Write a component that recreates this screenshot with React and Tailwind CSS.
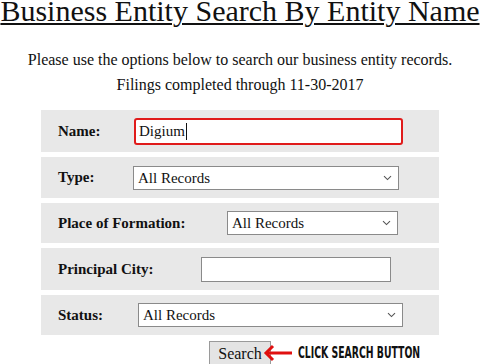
export default function App() {
  const Chevron = () => (
    <svg className="absolute right-[6px] top-1/2 -translate-y-1/2" width="9" height="6" viewBox="0 0 9 6">
      <path d="M1 1.2 L4.5 4.6 L8 1.2" fill="none" stroke="#555" strokeWidth="1.1" />
    </svg>
  );

  const Select = ({ width }) => (
    <div className={`relative h-[24px] ${width} border border-[#8a8a8a] bg-white pl-[4px] text-[15px] leading-[22px] text-[#111]`}>
      All Records
      <Chevron />
    </div>
  );

  return (
    <div className="w-[480px] h-[364px] overflow-hidden bg-white font-['Liberation_Serif',serif] text-[#111]">
      {/* Header */}
      <h1 className="text-center text-[30px] leading-[20px] pt-[1px] underline decoration-[2px] underline-offset-[2px] whitespace-nowrap">
        Business Entity Search By Entity Name
      </h1>
      <p className="mt-[26px] text-center text-[16px] leading-[25px]">
        Please use the options below to search our business entity records.
        <br />
        Filings completed through 11-30-2017
      </p>

      {/* Search form */}
      <div className="mx-auto mt-[13px] flex w-[398px] flex-col gap-[5px]">
        <div className="flex h-[42px] items-center bg-[#e8e8e8] pl-[17px]">
          <span className="w-[76px] text-[15px] font-bold">Name:</span>
          <div className="flex h-[27px] w-[269px] items-center rounded-[3px] border-2 border-[#e01b1b] bg-white pl-[3px] text-[15px]">
            Digium
            <span className="ml-[1px] h-[17px] w-[1px] bg-[#111]" />
          </div>
        </div>

        <div className="flex h-[41px] items-center bg-[#e8e8e8] pl-[17px]">
          <span className="w-[75px] text-[15px] font-bold">Type:</span>
          <Select width="w-[266px]" />
        </div>

        <div className="flex h-[40px] items-center bg-[#e8e8e8] pl-[17px]">
          <span className="w-[169px] text-[15px] font-bold">Place of Formation:</span>
          <Select width="w-[171px]" />
        </div>

        <div className="flex h-[42px] items-center bg-[#e8e8e8] pl-[17px]">
          <span className="w-[143px] text-[15px] font-bold">Principal City:</span>
          <div className="h-[25px] w-[190px] border border-[#8a8a8a] bg-white" />
        </div>

        <div className="flex h-[40px] items-center bg-[#e8e8e8] pl-[17px]">
          <span className="w-[80px] text-[15px] font-bold">Status:</span>
          <Select width="w-[265px]" />
        </div>
      </div>

      {/* Button */}
      <div className="relative mt-[6px] flex justify-center">
        <div className="h-[26px] w-[62px] border border-[#9a9a9a] bg-[#e4e4e4] text-center text-[16px] leading-[24px]">
          Search
        </div>
        <svg className="absolute left-[263px] top-[3px]" width="32" height="20" viewBox="0 0 32 20">
          <path d="M3 9 L29 9" stroke="#e01010" strokeWidth="3" />
          <path d="M10 2 L3 9 L10 16" fill="none" stroke="#e01010" strokeWidth="3" />
        </svg>
        <span className="absolute left-[298px] top-[4px] origin-left scale-x-[0.69] whitespace-nowrap font-['DejaVu_Sans_Condensed',sans-serif] text-[15px] font-bold leading-[16px] text-[#111]">
          CLICK SEARCH BUTTON
        </span>
      </div>
    </div>
  );
}
